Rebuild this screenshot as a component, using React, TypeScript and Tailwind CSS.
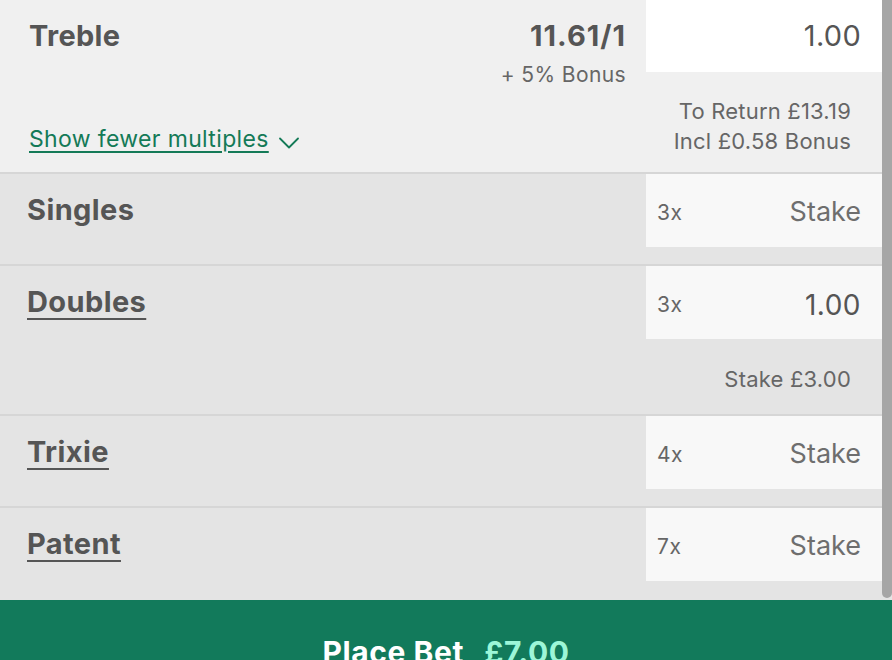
import React from 'react'

const FONT = { fontFamily: 'Inter, "Noto Sans", sans-serif' }

type Row = {
  name: string
  count: string
  stake?: string
  underline: boolean
  note?: string
  tall?: boolean
}

const ROWS: Row[] = [
  { name: 'Singles', count: '3x', underline: false },
  { name: 'Doubles', count: '3x', stake: '1.00', underline: true, note: 'Stake £3.00' },
  { name: 'Trixie', count: '4x', underline: true },
  { name: 'Patent', count: '7x', underline: true, tall: true },
]

function Chevron() {
  return (
    <svg width="20" height="12" viewBox="0 0 20 12" fill="none" className="ml-[10px] mt-[8px]">
      <path d="M1 1.5l9 9 9-9" stroke="#147a57" strokeWidth="1.8" strokeLinecap="round" strokeLinejoin="round" />
    </svg>
  )
}

function MultipleRow({ row }: { row: Row }) {
  return (
    <div className="border-t-2 border-[#d6d6d6] bg-[#e4e4e4]">
      <div className={`flex ${row.note ? 'h-[148px]' : row.tall ? 'h-[92px]' : 'h-[90px]'}`}>
        <div className="flex-1 pl-[27px] pt-[18px]">
          <span
            className={`text-[29px] font-bold leading-[36px] tracking-[0.4px] text-[#555555] ${row.underline ? 'underline decoration-2 underline-offset-[6px]' : ''}`}
          >
            {row.name}
          </span>
        </div>
        <div className="mr-[10px] flex w-[236px] flex-col">
          <div className="flex h-[73px] items-center justify-between bg-[#f8f8f8] pl-[11px] pr-[21px] pt-[4px]">
            <span className="text-[21px] tracking-[0.5px] text-[#666666]">{row.count}</span>
            <span className={`text-[27px] ${row.stake ? 'text-[28px] tracking-[0.5px] text-[#555555]' : 'text-[#6e6e6e]'}`}>
              {row.stake ?? 'Stake'}
            </span>
          </div>
          {row.note && (
            <div className="pr-[31px] pt-[24px] text-right text-[22px] tracking-[0.2px] text-[#666666]">{row.note}</div>
          )}
        </div>
      </div>
    </div>
  )
}

export default function App() {
  return (
    <div className="relative h-[660px] w-[892px] overflow-hidden bg-[#e4e4e4]" style={FONT}>
      {/* Treble */}
      <div className="flex h-[172px] bg-[#f0f0f0]">
        <div className="flex flex-1 flex-col pl-[29px]">
          <div className="flex justify-between pt-[18px] pr-[20px]">
            <span className="text-[29px] font-bold leading-[36px] tracking-[0.3px] text-[#555555]">Treble</span>
            <div className="flex flex-col items-end">
              <span className="text-[29px] font-bold leading-[36px] tracking-[1px] text-[#555555]">11.61/1</span>
              <span className="mt-[8px] text-[21px] leading-[26px] tracking-[0.4px] text-[#666666]">+ 5% Bonus</span>
            </div>
          </div>
          <div className="mt-[34px] flex items-center">
            <span className="text-[23px] tracking-[0.35px] text-[#147a57] underline decoration-2 underline-offset-[4px]">
              Show fewer multiples
            </span>
            <Chevron />
          </div>
        </div>
        <div className="mr-[10px] flex w-[236px] flex-col">
          <div className="flex h-[72px] items-center justify-end bg-white pr-[21px]">
            <span className="text-[29px] tracking-[0.3px] text-[#555555]">1.00</span>
          </div>
          <div className="pr-[31px] pt-[24px] text-right text-[22px] leading-[30px] tracking-[0.2px] text-[#666666]">
            <div>To Return £13.19</div>
            <div>Incl £0.58 Bonus</div>
          </div>
        </div>
      </div>

      {ROWS.map((r) => (
        <MultipleRow key={r.name} row={r} />
      ))}

      {/* Place bet */}
      <div className="flex h-[90px] justify-center bg-[#127a5b] pt-[30px]">
        <span className="text-[30px] font-bold tracking-[0.6px] text-white">Place Bet</span>
        <span className="ml-[20px] text-[30px] font-bold tracking-[0.6px] text-[#9cf7d8]">£7.00</span>
      </div>

      {/* scrollbar thumb */}
      <div className="absolute right-0 top-0 h-[598px] w-[10px] rounded-b-[5px] bg-[#a6a6a6]" />
    </div>
  )
}
